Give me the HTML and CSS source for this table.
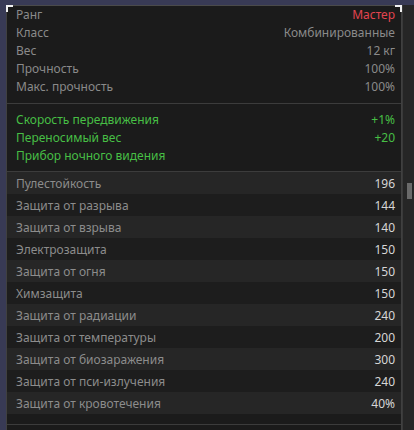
FILE: index.html
```html
<!DOCTYPE html>
<html lang="ru">
<head>
<meta charset="utf-8">
<link rel="stylesheet" href="styles.css">
</head>
<body>
<div class="frame">
  <div class="panel">
    <span class="corner corner-l"></span>
    <span class="corner corner-r"></span>
    <div class="section info">
      <div class="row"><span>Ранг</span><span class="red">Мастер</span></div>
      <div class="row"><span>Класс</span><span>Комбинированные</span></div>
      <div class="row"><span>Вес</span><span>12 кг</span></div>
      <div class="row"><span>Прочность</span><span>100%</span></div>
      <div class="row"><span>Макс. прочность</span><span>100%</span></div>
    </div>
    <div class="section bonus">
      <div class="row"><span>Скорость передвижения</span><span>+1%</span></div>
      <div class="row"><span>Переносимый вес</span><span>+20</span></div>
      <div class="row"><span>Прибор ночного видения</span><span></span></div>
    </div>
    <div class="section stats">
      <div class="srow"><span>Пулестойкость</span><span class="val">196</span></div>
      <div class="srow"><span>Защита от разрыва</span><span class="val">144</span></div>
      <div class="srow"><span>Защита от взрыва</span><span class="val">140</span></div>
      <div class="srow"><span>Электрозащита</span><span class="val">150</span></div>
      <div class="srow"><span>Защита от огня</span><span class="val">150</span></div>
      <div class="srow"><span>Химзащита</span><span class="val">150</span></div>
      <div class="srow"><span>Защита от радиации</span><span class="val">240</span></div>
      <div class="srow"><span>Защита от температуры</span><span class="val">200</span></div>
      <div class="srow"><span>Защита от биозаражения</span><span class="val">300</span></div>
      <div class="srow"><span>Защита от пси-излучения</span><span class="val">240</span></div>
      <div class="srow"><span>Защита от кровотечения</span><span class="val">40%</span></div>
    </div>
    <div class="section tail"></div>
  </div>
  <div class="scrollbar"><div class="thumb"></div></div>
</div>
</body>
</html>
```
FILE: styles.css
```css
html, body {
  margin: 0;
  padding: 0;
}
body {
  background: #383a55;
  width: 414px;
  height: 430px;
  overflow: hidden;
  font-family: "Noto Sans", "DejaVu Sans", sans-serif;
  font-size: 12px;
}
.frame {
  display: flex;
  margin-top: 5px;
  margin-left: 6px;
  height: 425px;
}
.panel {
  position: relative;
  width: 394px;
  background: #1b1b1b;
  border-top: 1px solid #4a4a4a;
  border-left: 1px solid #404040;
  border-right: 1px solid #404040;
  display: flex;
  flex-direction: column;
}
.corner {
  position: absolute;
  top: -1px;
  width: 5px;
  height: 5px;
  border-top: 2px solid #f0f0f0;
}
.corner-l {
  left: -1px;
  border-left: 2px solid #f0f0f0;
}
.corner-r {
  right: -1px;
  border-right: 2px solid #f0f0f0;
}
.section {
  border-bottom: 1px solid #3c3c3c;
}
.info {
  padding: 0 6px 7px 9px;
}
.bonus {
  padding: 7px 6px 6px 9px;
}
.row {
  display: flex;
  justify-content: space-between;
  height: 18px;
  line-height: 18px;
  color: #8a8a8a;
}
.bonus .row {
  color: #47bf45;
}
.red {
  color: #e2444f;
}
.stats {
  padding-bottom: 10px;
}
.srow {
  display: flex;
  justify-content: space-between;
  height: 22px;
  line-height: 24px;
  padding: 0 6px 0 9px;
  color: #8c8c8c;
  background: #1d1d1d;
}
.srow:nth-child(odd) {
  background: #262626;
}
.val {
  color: #d6d6d6;
}
.tail {
  flex: 1;
  border-bottom: none;
}
.scrollbar {
  width: 12px;
  background: #262626;
  border-left: 1px solid #3a3a3a;
  padding-top: 178px;
  box-sizing: border-box;
}
.thumb {
  width: 5px;
  height: 16px;
  margin-left: 4px;
  background: #6a6a6a;
}
```
